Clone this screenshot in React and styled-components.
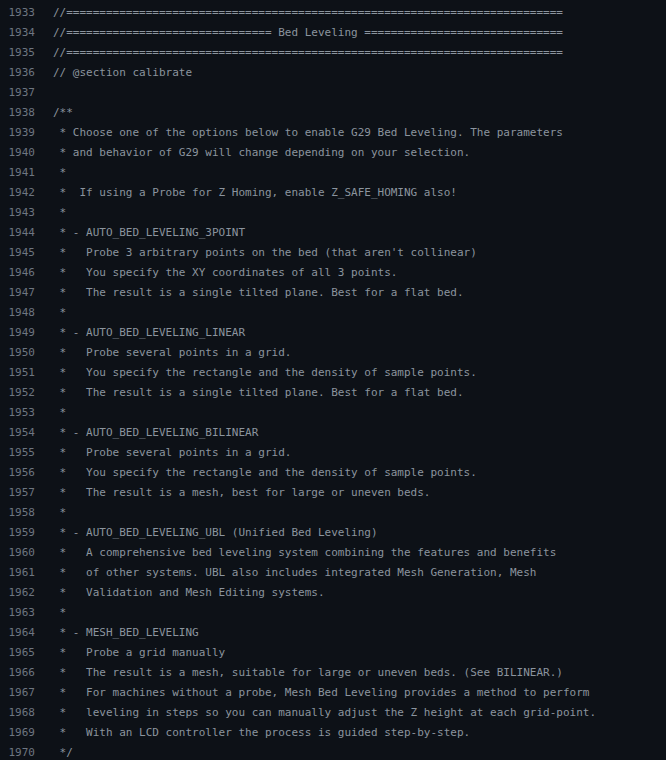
import React from "react";
import styled, { createGlobalStyle } from "styled-components";

const Global = createGlobalStyle`
  html, body { margin: 0; padding: 0; background: #0d1117; }
  body { overflow: hidden; }
`;

const CodeView = styled.div`
  background: #0d1117;
  width: 666px;
  height: 760px;
  padding-top: 3px;
  box-sizing: border-box;
  font-family: "DejaVu Sans Mono", "Liberation Mono", monospace;
  font-size: 11px;
`;

const Row = styled.div`
  display: flex;
  height: 20px;
  line-height: 20px;
`;

const LineNo = styled.span`
  width: 35px;
  flex: none;
  text-align: right;
  color: #6e7681;
`;

const Code = styled.span`
  padding-left: 18px;
  white-space: pre;
  color: #8b949e;
`;

const bar = "//" + "=".repeat(75);
const title = "//" + "=".repeat(31) + " Bed Leveling " + "=".repeat(30);

const lines = [
  bar,
  title,
  bar,
  "// @section calibrate",
  "",
  "/**",
  " * Choose one of the options below to enable G29 Bed Leveling. The parameters",
  " * and behavior of G29 will change depending on your selection.",
  " *",
  " *  If using a Probe for Z Homing, enable Z_SAFE_HOMING also!",
  " *",
  " * - AUTO_BED_LEVELING_3POINT",
  " *   Probe 3 arbitrary points on the bed (that aren't collinear)",
  " *   You specify the XY coordinates of all 3 points.",
  " *   The result is a single tilted plane. Best for a flat bed.",
  " *",
  " * - AUTO_BED_LEVELING_LINEAR",
  " *   Probe several points in a grid.",
  " *   You specify the rectangle and the density of sample points.",
  " *   The result is a single tilted plane. Best for a flat bed.",
  " *",
  " * - AUTO_BED_LEVELING_BILINEAR",
  " *   Probe several points in a grid.",
  " *   You specify the rectangle and the density of sample points.",
  " *   The result is a mesh, best for large or uneven beds.",
  " *",
  " * - AUTO_BED_LEVELING_UBL (Unified Bed Leveling)",
  " *   A comprehensive bed leveling system combining the features and benefits",
  " *   of other systems. UBL also includes integrated Mesh Generation, Mesh",
  " *   Validation and Mesh Editing systems.",
  " *",
  " * - MESH_BED_LEVELING",
  " *   Probe a grid manually",
  " *   The result is a mesh, suitable for large or uneven beds. (See BILINEAR.)",
  " *   For machines without a probe, Mesh Bed Leveling provides a method to perform",
  " *   leveling in steps so you can manually adjust the Z height at each grid-point.",
  " *   With an LCD controller the process is guided step-by-step.",
  " */",
];

export default function App() {
  return (
    <>
      <Global />
      <CodeView>
        {lines.map((text, i) => (
          <Row key={i}>
            <LineNo>{1933 + i}</LineNo>
            <Code>{text}</Code>
          </Row>
        ))}
      </CodeView>
    </>
  );
}
